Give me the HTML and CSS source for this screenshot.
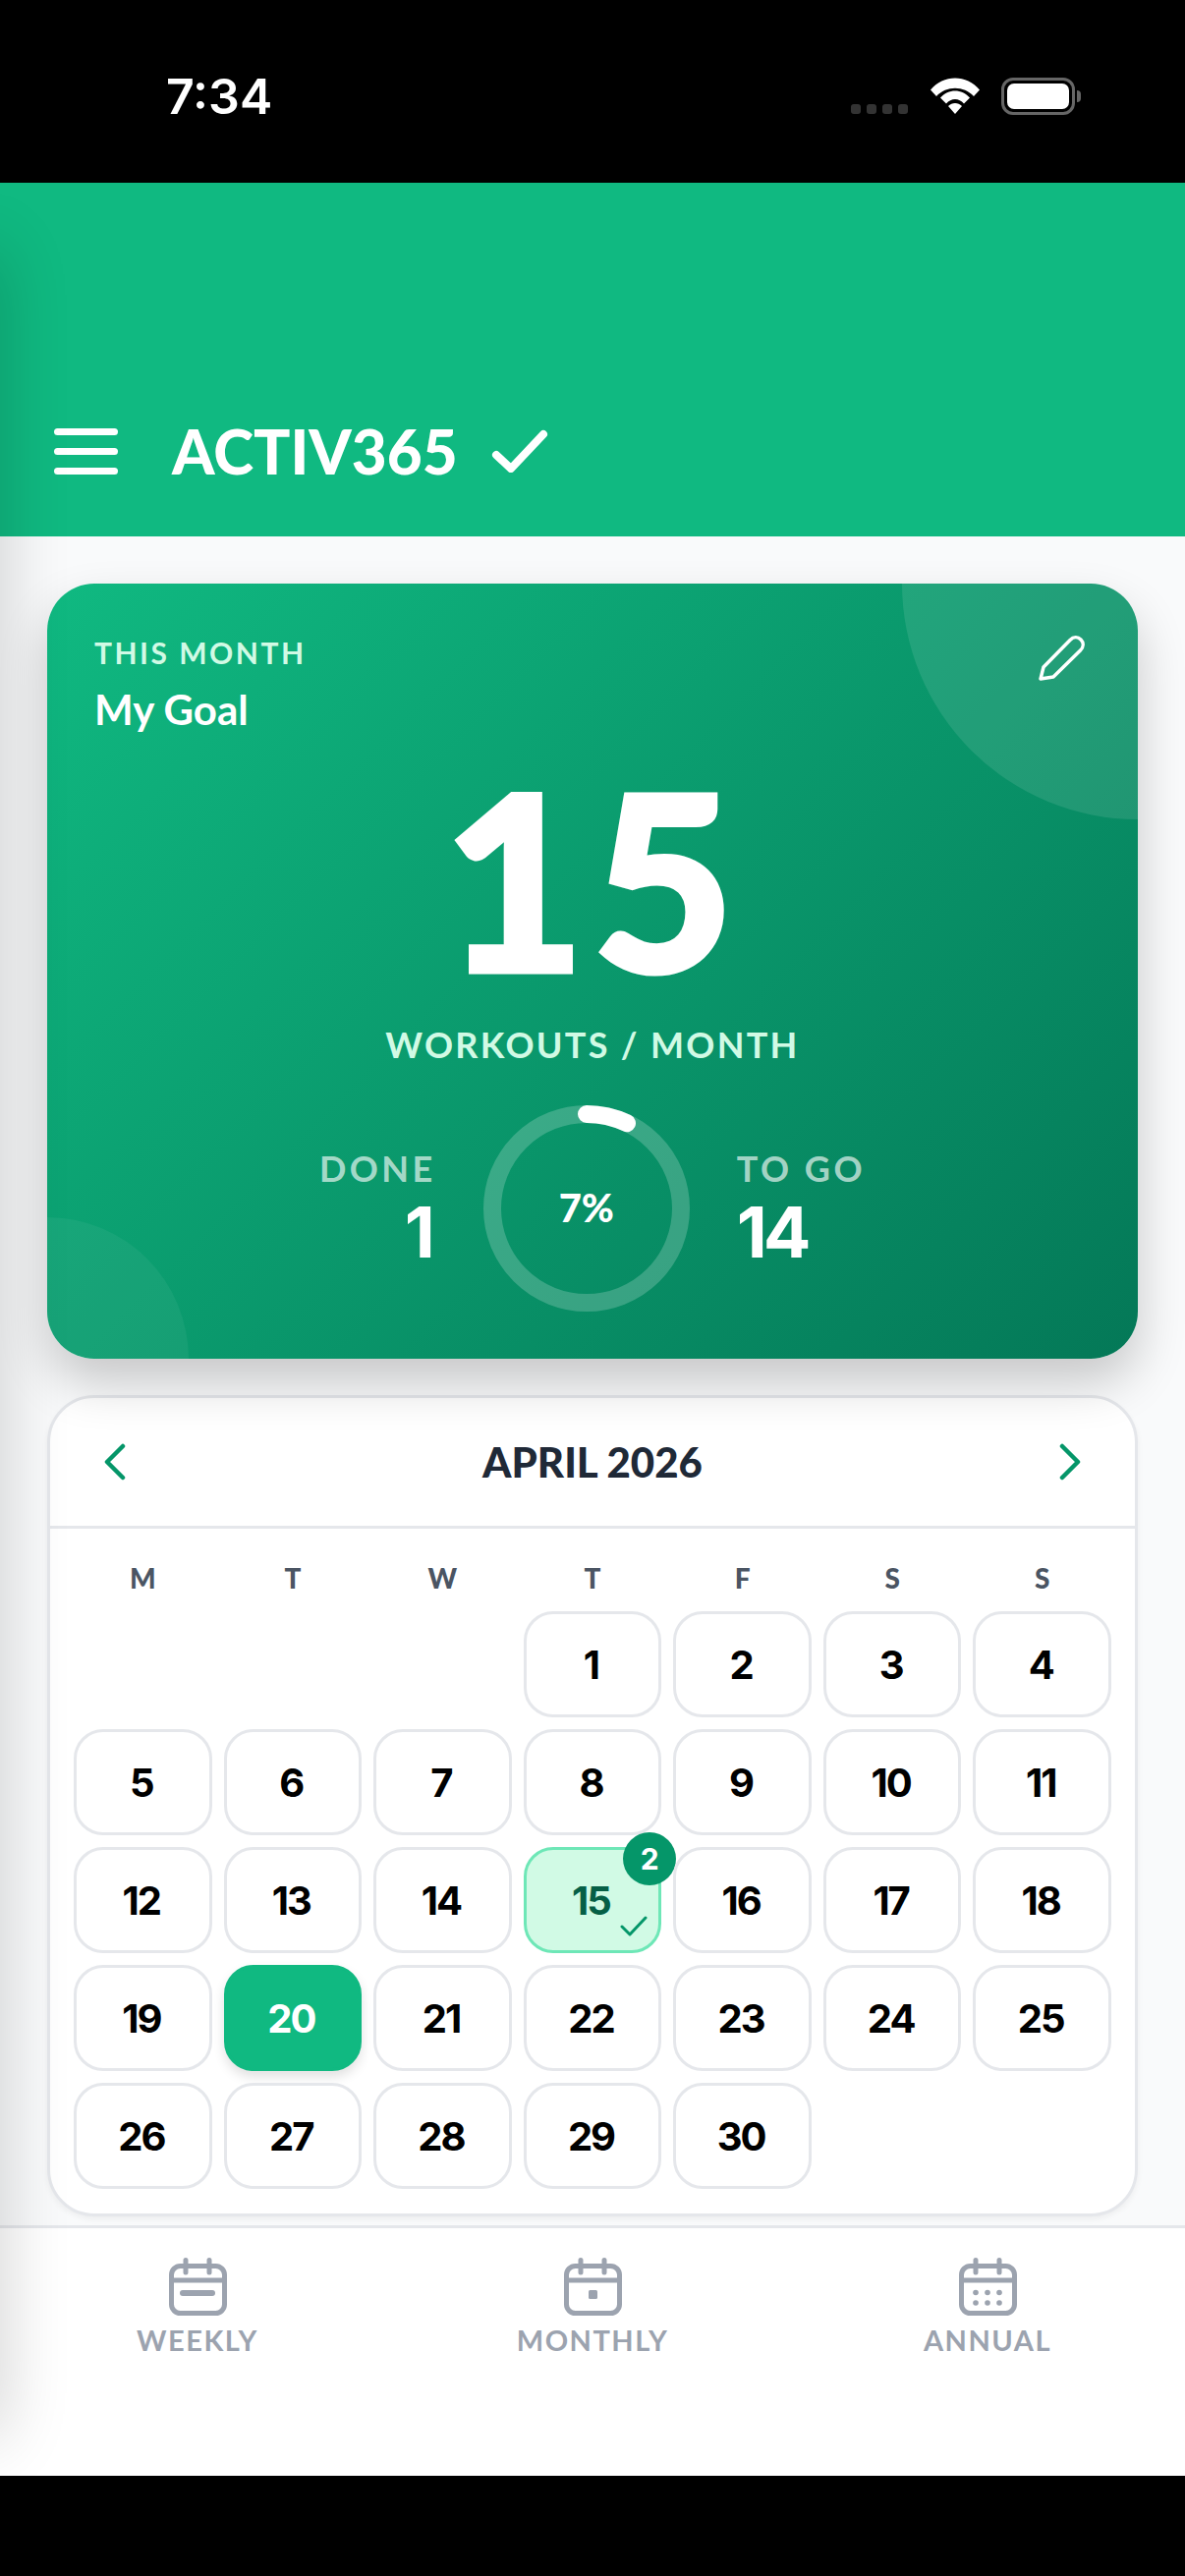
FILE: index.html
```html
<!DOCTYPE html>
<html lang="en">

<head>
    <meta charset="UTF-8">
    <meta name="viewport" content="width=device-width, initial-scale=1.0">
    <title>Activ365</title>
    <link rel="stylesheet" href="styles.css">
</head>

<body>
    <div class="app">
        <div class="status-bar">
            <span class="time">7:34</span>
            <div class="status-icons">
                <div class="signal"><i></i><i></i><i></i><i></i></div>
                <svg class="wifi" width="50" height="37" viewBox="0 0 50 37">
                    <path d="M0 12.5C13-3.500 37-3.500 50 12.500L44 19C34 8 16 8 6 19Z" fill="#fff"/>
                    <path d="M10 23.500C18 14 32 14 40 23.500L34 29.500C29 23.500 21 23.500 16 29.500Z" fill="#fff" transform="translate(0 -3)"/>
                    <path d="M18 29L25 37L32 29C28 25 22 25 18 29Z" fill="#fff"/>
                </svg>
                <div class="battery"><div class="battery-fill"></div></div>
                <div class="battery-nub"></div>
            </div>
        </div>

        <header class="topbar">
            <div class="menu-icon"><span></span><span></span><span></span></div>
            <h1 class="brand">ACTIV365</h1>
            <svg class="brand-check" width="58" height="44" viewBox="0 0 58 44" fill="none" stroke="#fff" stroke-width="8" stroke-linecap="round" stroke-linejoin="round">
                <path d="M5 26L20 40L53 5"/>
            </svg>
        </header>

        <main class="content">
            <section class="goal-card">
                <div class="blob blob-top"></div>
                <div class="blob blob-bottom"></div>
                <svg class="edit-icon" width="48" height="48" viewBox="0 0 48 48" fill="none" stroke="#fff" stroke-width="3.500" stroke-linejoin="round" stroke-linecap="round">
                    <path d="M3 45L6 33L33 5.500C36.500 2 41 2 44 5C47 8 47 12.500 43.500 16L16 43Z"/>
                </svg>
                <p class="goal-eyebrow">THIS MONTH</p>
                <p class="goal-title">My Goal</p>
                <div class="goal-number">15</div>
                <p class="goal-unit">WORKOUTS / MONTH</p>
                <div class="goal-stats">
                    <div class="stat stat-done">
                        <span class="stat-label">DONE</span>
                        <span class="stat-value">1</span>
                    </div>
                    <div class="ring">
                        <svg width="210" height="210" viewBox="0 0 210 210" fill="none" stroke-width="18">
                            <circle cx="105" cy="105" r="96" stroke="rgba(255,255,255,0.2)"/>
                            <path d="M105 9A96 96 0 0 1 146 18.200" stroke="#fff" stroke-linecap="round"/>
                        </svg>
                        <span class="ring-text">7%</span>
                    </div>
                    <div class="stat">
                        <span class="stat-label">TO GO</span>
                        <span class="stat-value">14</span>
                    </div>
                </div>
            </section>

            <section class="calendar">
                <div class="cal-header">
                    <svg width="24" height="38" viewBox="0 0 24 38" fill="none" stroke="#059669" stroke-width="4.500" stroke-linecap="round" stroke-linejoin="round"><path d="M20 3L4 19L20 35"/></svg>
                    <h2 class="cal-title">APRIL 2026</h2>
                    <svg width="24" height="38" viewBox="0 0 24 38" fill="none" stroke="#059669" stroke-width="4.500" stroke-linecap="round" stroke-linejoin="round"><path d="M4 3L20 19L4 35"/></svg>
                </div>
                <div class="cal-body">
                    <div class="cal-grid weekdays">
                        <span>M</span><span>T</span><span>W</span><span>T</span><span>F</span><span>S</span><span>S</span>
                    </div>
                    <div class="cal-grid days" id="days"></div>
                </div>
            </section>
        </main>

        <nav class="bottom-nav">
            <div class="nav-item">
                <svg width="60" height="60" viewBox="0 0 60 60" fill="none" stroke="#9ca3af" stroke-width="5" stroke-linecap="round">
                    <rect x="3.500" y="8.500" width="54" height="48" rx="9"/>
                    <path d="M3.500 23H57.500M18 2.500V15M42 2.500V15"/>
                    <rect x="12" y="33" width="36" height="6" rx="3" fill="#9ca3af" stroke="none"/>
                </svg>
                <span>WEEKLY</span>
            </div>
            <div class="nav-item">
                <svg width="60" height="60" viewBox="0 0 60 60" fill="none" stroke="#9ca3af" stroke-width="5" stroke-linecap="round">
                    <rect x="3.500" y="8.500" width="54" height="48" rx="9"/>
                    <path d="M3.500 23H57.500M18 2.500V15M42 2.500V15"/>
                    <rect x="26" y="33" width="9" height="9" rx="1.500" fill="#9ca3af" stroke="none"/>
                </svg>
                <span>MONTHLY</span>
            </div>
            <div class="nav-item">
                <svg width="60" height="60" viewBox="0 0 60 60" fill="none" stroke="#9ca3af" stroke-width="5" stroke-linecap="round">
                    <rect x="3.500" y="8.500" width="54" height="48" rx="9"/>
                    <path d="M3.500 23H57.500M18 2.500V15M42 2.500V15"/>
                    <g fill="#9ca3af" stroke="none">
                        <circle cx="18" cy="35.500" r="2.800"/><circle cx="30" cy="35.500" r="2.800"/><circle cx="42" cy="35.500" r="2.800"/>
                        <circle cx="18" cy="46" r="2.800"/><circle cx="30" cy="46" r="2.800"/><circle cx="42" cy="46" r="2.800"/>
                    </g>
                </svg>
                <span>ANNUAL</span>
            </div>
        </nav>

        <div class="bottom-strip"></div>
        <div class="edge-shadow"></div>
    </div>

    <script>
        const daysEl = document.getElementById('days');
        for (let i = 0; i < 3; i++) {
            daysEl.appendChild(document.createElement('div'));
        }
        for (let d = 1; d <= 30; d++) {
            const cell = document.createElement('div');
            cell.className = 'day';
            cell.textContent = d;
            if (d === 20) cell.classList.add('today');
            if (d === 15) {
                cell.classList.add('logged');
                cell.innerHTML = `15<span class="badge">2</span><svg class="day-check" width="28" height="21" viewBox="0 0 28 21" fill="none" stroke="#059669" stroke-width="3" stroke-linecap="round" stroke-linejoin="round"><path d="M2 11L10 19L26 2"/></svg>`;
            }
            daysEl.appendChild(cell);
        }
    </script>
</body>
</html>
```

FILE: styles.css
```css
* {
    box-sizing: border-box;
}

html,
body {
    margin: 0;
    padding: 0;
}

body {
    font-family: 'Lato', 'Inter', sans-serif;
    background-color: #000;
}

p,
h1,
h2 {
    margin: 0;
}

.app {
    position: relative;
    width: 1206px;
    height: 2622px;
    display: flex;
    flex-direction: column;
    overflow: hidden;
    background-color: #f9fafb;
}

/* status bar */
.status-bar {
    height: 186px;
    background-color: #000;
    color: #fff;
    display: flex;
    justify-content: space-between;
    padding: 70px 106px 0 169px;
}

.time {
    font-family: 'Inter', sans-serif;
    font-size: 50px;
    font-weight: 600;
    line-height: 56px;
}

.status-icons {
    display: flex;
    align-items: flex-start;
    padding-top: 9px;
}

.signal {
    display: flex;
    gap: 6px;
    margin-top: 27px;
    margin-right: 23px;
}

.signal i {
    width: 10px;
    height: 10px;
    border-radius: 3px;
    background-color: #333;
}

.wifi {
    margin-right: 22px;
}

.battery {
    width: 75px;
    height: 38px;
    border: 3px solid #666;
    border-radius: 12px;
    padding: 3px;
}

.battery-fill {
    height: 100%;
    background-color: #fff;
    border-radius: 7px;
}

.battery-nub {
    width: 4px;
    height: 12px;
    margin: 13px 0 0 2px;
    background-color: #666;
    border-radius: 0 4px 4px 0;
}

/* header */
.topbar {
    height: 360px;
    background-color: #10b981;
    display: flex;
    align-items: center;
    padding: 186px 0 0 55px;
    color: #fff;
    flex-shrink: 0;
}

.menu-icon {
    width: 65px;
    display: flex;
    flex-direction: column;
    gap: 13px;
    margin-right: 55px;
}

.menu-icon span {
    height: 7px;
    border-radius: 4px;
    background-color: #fff;
}

.brand {
    font-size: 62px;
    font-weight: 900;
    line-height: 1;
}

.brand-check {
    margin-left: 34px;
}

/* main */
.content {
    flex: 1;
    padding: 48px 48px 0;
    display: flex;
    flex-direction: column;
    gap: 37px;
}

.goal-card {
    position: relative;
    z-index: 1;
    height: 789px;
    padding: 52px 48px 0;
    border-radius: 48px;
    overflow: hidden;
    color: #fff;
    background: linear-gradient(135deg, #10b981, #047857);
    box-shadow: 0 25px 50px rgba(0, 0, 0, 0.2);
}

.blob {
    position: absolute;
    border-radius: 50%;
}

.blob-top {
    top: -240px;
    right: -240px;
    width: 480px;
    height: 480px;
    background-color: rgba(255, 255, 255, 0.1);
}

.blob-bottom {
    bottom: -144px;
    left: -144px;
    width: 288px;
    height: 288px;
    background-color: rgba(255, 255, 255, 0.05);
}

.edit-icon {
    position: absolute;
    top: 52px;
    right: 54px;
}

.goal-eyebrow {
    font-size: 30px;
    font-weight: 700;
    letter-spacing: 2.500px;
    line-height: 36px;
    color: #d1fae5;
}

.goal-title {
    margin-top: 15px;
    font-size: 42px;
    font-weight: 700;
    line-height: 50px;
}

.goal-number {
    margin-top: 18px;
    font-size: 248px;
    font-weight: 900;
    letter-spacing: 8px;
    line-height: 256px;
    text-align: center;
    -webkit-text-stroke: 5px #fff;
}

.goal-unit {
    margin-top: 20px;
    font-size: 36px;
    font-weight: 700;
    letter-spacing: 2.300px;
    line-height: 44px;
    text-align: center;
    color: #d1fae5;
}

.goal-stats {
    margin-top: 40px;
    display: flex;
    justify-content: center;
    align-items: center;
    gap: 48px;
}

.stat {
    display: flex;
    flex-direction: column;
    margin-bottom: 2px;
}

.stat-done {
    align-items: flex-end;
}

.stat-done .stat-value {
    margin-right: 5px;
}

.stat-label {
    font-size: 36px;
    font-weight: 700;
    letter-spacing: 3.500px;
    line-height: 44px;
    color: rgba(255, 255, 255, 0.65);
}

.stat-value {
    margin-top: 5px;
    font-family: 'Inter', sans-serif;
    font-size: 72px;
    font-weight: 700;
    letter-spacing: -4px;
    line-height: 76px;
}

.ring {
    position: relative;
    width: 210px;
    height: 210px;
    display: flex;
    align-items: center;
    justify-content: center;
}

.ring svg {
    position: absolute;
    top: 0;
    left: 0;
}

.ring-text {
    font-size: 40px;
    font-weight: 900;
    margin-top: -2px;
}

/* calendar */
.calendar {
    height: 836px;
    background-color: #fff;
    border: 3px solid #e5e7eb;
    border-radius: 48px;
    box-shadow: 0 3px 6px rgba(0, 0, 0, 0.05);
}

.cal-header {
    height: 133px;
    padding: 0 54px;
    display: flex;
    align-items: center;
    justify-content: space-between;
    border-bottom: 3px solid #e5e7eb;
}

.cal-title {
    font-size: 42px;
    font-weight: 900;
    color: #1f2937;
}

.cal-body {
    padding: 0 24px;
}

.cal-grid {
    display: grid;
    grid-template-columns: repeat(7, 1fr);
    gap: 12px;
}

.weekdays {
    height: 84px;
    align-items: center;
    padding-top: 16px;
    text-align: center;
    font-size: 28px;
    font-weight: 900;
    color: #4b5563;
}

.days {
    grid-auto-rows: 108px;
}

.day {
    position: relative;
    display: flex;
    align-items: center;
    justify-content: center;
    padding-right: 3px;
    background-color: #fff;
    border: 3px solid #e5e7eb;
    border-radius: 30px;
    font-family: 'Inter', sans-serif;
    font-size: 40px;
    font-weight: 700;
    letter-spacing: -2px;
    color: #000;
}

.today {
    background-color: #10b981;
    border-color: #10b981;
    color: #fff;
    box-shadow: 0 6px 12px rgba(0, 0, 0, 0.12);
}

.logged {
    background-color: #d1fae5;
    border-color: #6ee7b7;
    color: #065f46;
}

.badge {
    position: absolute;
    top: -18px;
    right: -18px;
    width: 54px;
    height: 54px;
    border-radius: 50%;
    background-color: #059669;
    color: #fff;
    font-size: 30px;
    letter-spacing: 0;
    line-height: 54px;
    text-align: center;
}

.day-check {
    position: absolute;
    right: 11px;
    bottom: 14px;
}

/* bottom nav */
.bottom-nav {
    height: 255px;
    background-color: #fff;
    border-top: 3px solid #e5e7eb;
    display: flex;
    flex-shrink: 0;
}

.nav-item {
    flex: 1;
    display: flex;
    flex-direction: column;
    align-items: center;
    padding-top: 30px;
    color: #9ca3af;
    font-size: 29px;
    font-weight: 700;
    letter-spacing: 1.500px;
    line-height: 36px;
}

.nav-item span {
    margin-top: 6px;
}

.bottom-strip {
    height: 102px;
    background-color: #000;
    flex-shrink: 0;
}

/* soft shadow along the left edge, lies over everything */
.edge-shadow {
    position: absolute;
    z-index: 2;
    top: 186px;
    left: 0;
    width: 140px;
    height: 2334px;
    overflow: hidden;
    pointer-events: none;
}

.edge-shadow::before {
    content: "";
    position: absolute;
    top: 70px;
    bottom: 40px;
    left: -60px;
    width: 60px;
    box-shadow: 0 0 70px rgba(0, 0, 0, 0.2);
}
```
